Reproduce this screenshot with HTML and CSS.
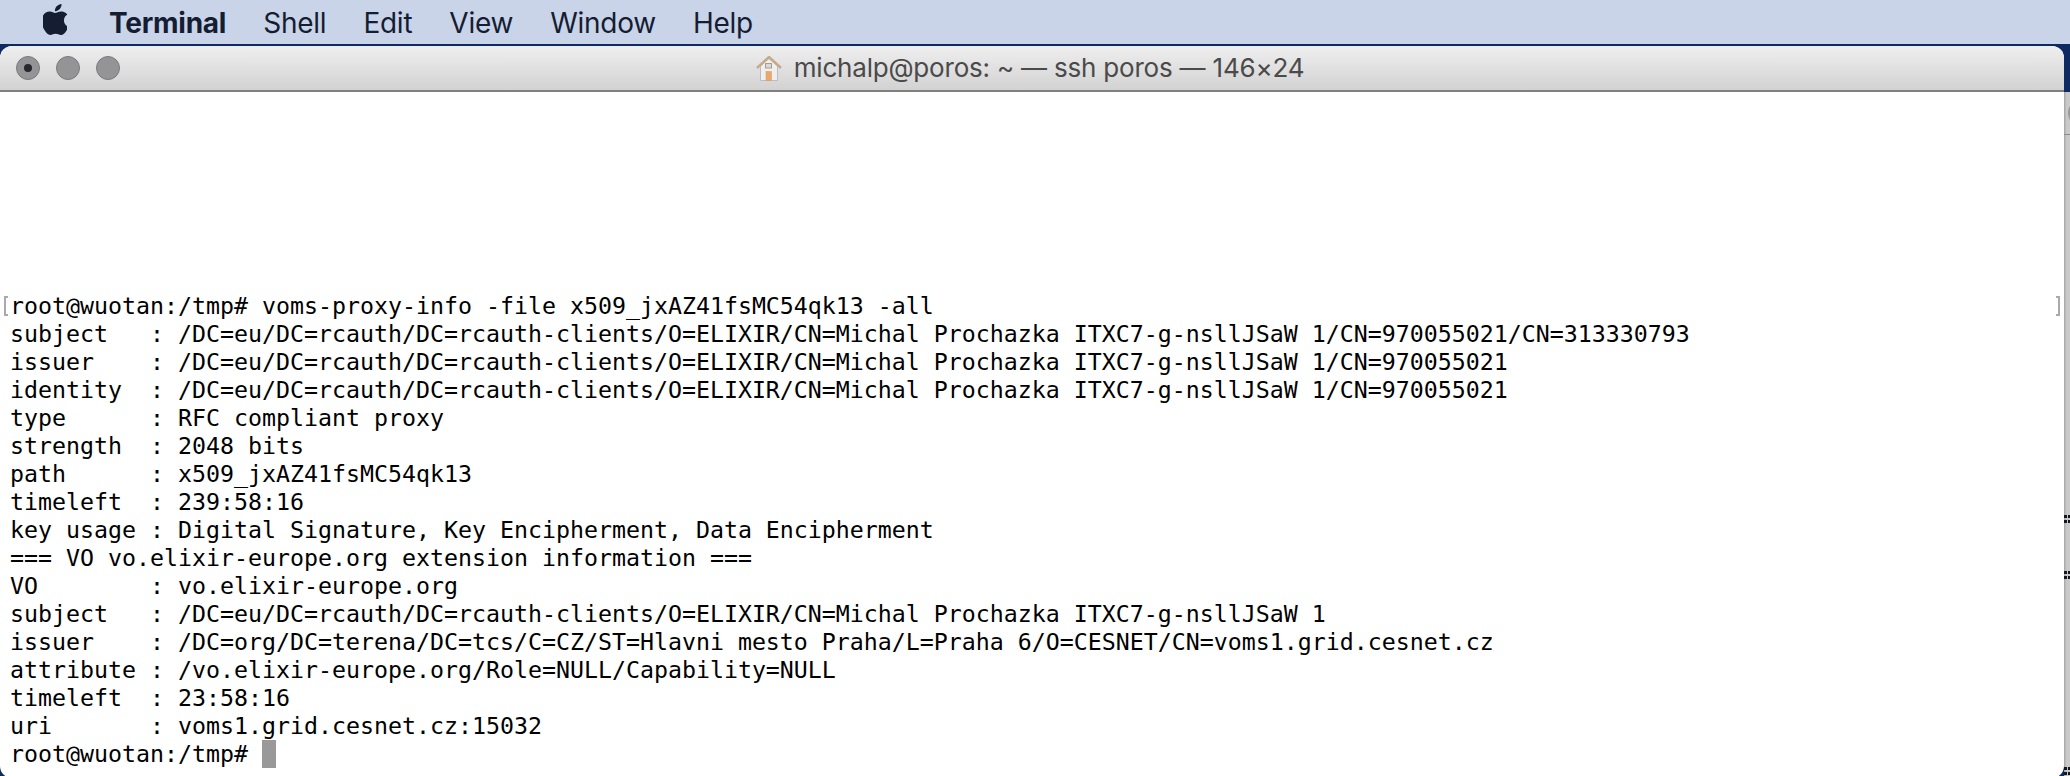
FILE: index.html
```html
<!DOCTYPE html>
<html lang="en">
<head>
<meta charset="utf-8">
<title>Terminal</title>
<link rel="stylesheet" href="styles.css">
</head>
<body>
<header class="menubar">
  <svg class="apple" viewBox="3.2 0 17.6 24" preserveAspectRatio="none" aria-hidden="true"><path d="M12.152 6.896c-.948 0-2.415-1.078-3.96-1.04-2.04.027-3.91 1.183-4.961 3.014-2.117 3.675-.546 9.103 1.519 12.09 1.013 1.454 2.208 3.09 3.792 3.039 1.52-.065 2.09-.987 3.935-.987 1.831 0 2.35.987 3.96.948 1.637-.026 2.676-1.48 3.676-2.948 1.156-1.688 1.636-3.325 1.662-3.415-.039-.013-3.182-1.221-3.22-4.857-.026-3.04 2.48-4.494 2.597-4.559-1.429-2.09-3.623-2.324-4.39-2.376-2-.156-3.675 1.09-4.61 1.09zM15.53 3.83c.843-1.012 1.4-2.427 1.245-3.83-1.207.052-2.662.805-3.532 1.818-.78.896-1.454 2.338-1.273 3.714 1.338.104 2.715-.688 3.559-1.701"/></svg>
  <nav class="menu">
    <span class="menu-item app-name">Terminal</span>
    <span class="menu-item">Shell</span>
    <span class="menu-item">Edit</span>
    <span class="menu-item">View</span>
    <span class="menu-item">Window</span>
    <span class="menu-item">Help</span>
  </nav>
</header>
<div class="desktop">
  <main class="window">
    <div class="titlebar">
      <div class="lights">
        <span class="light light-active"></span>
        <span class="light"></span>
        <span class="light"></span>
      </div>
      <svg class="home" viewBox="0 0 26 25" aria-hidden="true">
        <path class="home-body" d="M4.500 10 13 2.500 21.500 10V24.500H4.500Z"/>
        <path class="home-roof" d="M1 12 13 1 25 12" />
        <rect class="home-window" x="9.500" y="7.500" width="6" height="4.500"/>
        <rect class="home-door" x="10" y="15.500" width="5.500" height="9"/>
      </svg>
      <span class="title">michalp@poros: ~ — ssh poros — 146×24</span>
    </div>
    <div class="terminal">
      <span class="mark mark-left"></span>
      <span class="mark mark-right"></span>
<pre class="output">root@wuotan:/tmp# voms-proxy-info -file x509_jxAZ41fsMC54qk13 -all
subject   : /DC=eu/DC=rcauth/DC=rcauth-clients/O=ELIXIR/CN=Michal Prochazka ITXC7-g-nsllJSaW 1/CN=970055021/CN=313330793
issuer    : /DC=eu/DC=rcauth/DC=rcauth-clients/O=ELIXIR/CN=Michal Prochazka ITXC7-g-nsllJSaW 1/CN=970055021
identity  : /DC=eu/DC=rcauth/DC=rcauth-clients/O=ELIXIR/CN=Michal Prochazka ITXC7-g-nsllJSaW 1/CN=970055021
type      : RFC compliant proxy
strength  : 2048 bits
path      : x509_jxAZ41fsMC54qk13
timeleft  : 239:58:16
key usage : Digital Signature, Key Encipherment, Data Encipherment
=== VO vo.elixir-europe.org extension information ===
VO        : vo.elixir-europe.org
subject   : /DC=eu/DC=rcauth/DC=rcauth-clients/O=ELIXIR/CN=Michal Prochazka ITXC7-g-nsllJSaW 1
issuer    : /DC=org/DC=terena/DC=tcs/C=CZ/ST=Hlavni mesto Praha/L=Praha 6/O=CESNET/CN=voms1.grid.cesnet.cz
attribute : /vo.elixir-europe.org/Role=NULL/Capability=NULL
timeleft  : 23:58:16
uri       : voms1.grid.cesnet.cz:15032
root@wuotan:/tmp# <span class="cursor"></span></pre>
    </div>
  </main>
  <aside class="strip">
    <div class="strip-cap"></div>
    <div class="strip-body">
      <span class="ring"></span>
      <span class="strip-line"></span>
      <span class="dots dots-a"></span>
      <span class="dots dots-b"></span>
      <span class="dots dots-c"></span>
    </div>
  </aside>
</div>
</body>
</html>
```
FILE: styles.css
```css
* { box-sizing: border-box; }

html, body {
  margin: 0;
  height: 776px;
  overflow: hidden;
}

body {
  background: #0d2a63;
  font-family: Inter, "Liberation Sans", sans-serif;
}

.menubar {
  display: flex;
  align-items: center;
  height: 44px;
  padding-left: 43px;
  background: #c9d4e8;
  color: #151d33;
}

.apple {
  width: 24px;
  height: 31px;
  margin-top: -5px;
  fill: #151d33;
}

.menu {
  display: flex;
  margin-left: 42px;
  padding-top: 2px;
  gap: 37px;
  font-size: 28px;
  line-height: 44px;
  letter-spacing: -0.25px;
}

.app-name { font-weight: 700; }

.desktop {
  display: flex;
  padding-top: 2px;
  align-items: flex-start;
}

.window {
  width: 2064px;
  height: 732px;
  border-radius: 12px;
  overflow: hidden;
  background: #fff;
}

.titlebar {
  position: relative;
  display: flex;
  align-items: center;
  justify-content: center;
  gap: 12px;
  height: 46px;
  padding-right: 4px;
  background: linear-gradient(#efefef, #d2d2d2);
  border-bottom: 2px solid #808080;
}

.lights {
  position: absolute;
  left: 16px;
  top: 10px;
  display: flex;
  gap: 16px;
}

.light {
  display: flex;
  align-items: center;
  justify-content: center;
  width: 24px;
  height: 24px;
  border-radius: 50%;
  background: #949497;
  border: 1px solid #7b7b7e;
}

.light-active::after {
  content: "";
  width: 8px;
  height: 8px;
  border-radius: 50%;
  background: #26262c;
}

.home {
  width: 26px;
  height: 25px;
  flex: none;
}

.home-body { fill: #efefef; stroke: #bdbdbd; stroke-width: 1; }
.home-roof { fill: none; stroke: #c6aa8c; stroke-width: 2.500; }
.home-window { fill: #d8d8d8; stroke: #a89c8c; stroke-width: 1; }
.home-door { fill: #eaa86a; stroke: #d49a60; stroke-width: .5; }

.title {
  font-size: 26px;
  line-height: 44px;
  letter-spacing: -0.2px;
  color: #4a4a4a;
}

.terminal {
  position: relative;
  padding: 200px 0 0 10px;
}

.output {
  margin: 0;
  font-family: "DejaVu Sans Mono", "Liberation Mono", monospace;
  font-size: 23.25px;
  line-height: 28px;
  color: #000;
}

.cursor {
  display: inline-block;
  width: 14px;
  height: 28px;
  vertical-align: top;
  background: #999;
}

.mark {
  position: absolute;
  top: 204px;
  width: 4px;
  height: 20px;
  border: 2px solid #aaa;
}

.mark-left { left: 4px; border-right: 0; }
.mark-right { right: 4px; border-left: 0; }

.strip {
  width: 6px;
  flex: none;
}

.strip-cap { height: 46px; }

.strip-body {
  position: relative;
  height: 686px;
  background: linear-gradient(90deg, #a2a2a2, #c8c8c8 40%, #cacaca);
}

.ring {
  position: absolute;
  left: 4px;
  top: 12px;
  width: 10px;
  height: 18px;
  border: 2px solid #9a9a9a;
  border-radius: 50%;
}

.strip-line {
  position: absolute;
  left: 0;
  right: 0;
  top: 42px;
  height: 1px;
  background: #8a8a8a;
}

.dots {
  position: absolute;
  left: 0;
  width: 6px;
  height: 8px;
  background:
    linear-gradient(90deg, #14171f 0 3px, transparent 3px 4px, #14171f 4px) top / 6px 3px no-repeat,
    linear-gradient(90deg, #14171f 0 3px, transparent 3px 4px, #14171f 4px) bottom / 6px 3px no-repeat;
}

.dots-a { top: 423px; }
.dots-b { top: 479px; }
.dots-c { top: 675px; }
```
